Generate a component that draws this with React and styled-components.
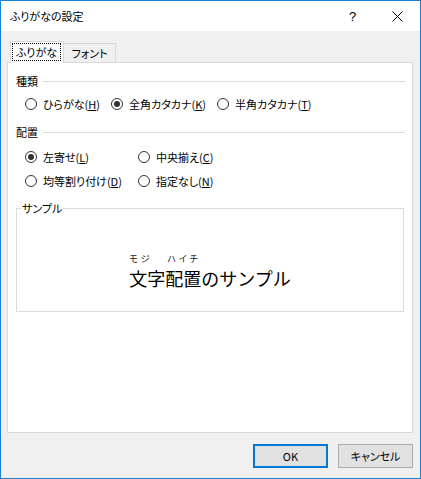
import React from "react";
import styled, { createGlobalStyle } from "styled-components";

const GlobalStyle = createGlobalStyle`
  html, body {
    margin: 0;
    padding: 0;
    background: #f0f0f0;
  }
  body {
    font-family: "Noto Sans CJK JP", "Noto Sans", sans-serif;
    font-size: 11px;
    color: #000;
    font-feature-settings: "palt";
  }
`;

// Window frame
const Window = styled.div`
  width: 421px;
  height: 479px;
  box-sizing: border-box;
  border: 1px solid #1c7fd6;
  background: #f0f0f0;
  display: flex;
  flex-direction: column;
`;

const TitleBar = styled.div`
  height: 30px;
  background: #fff;
  display: flex;
  align-items: center;
  padding-left: 9px;
  font-size: 11px;
`;

const Title = styled.div`
  flex: 1;
`;

const CaptionButton = styled.div`
  width: 45px;
  height: 30px;
  display: flex;
  align-items: center;
  justify-content: center;
  font-family: "Liberation Sans", sans-serif;
  font-size: 13px;
`;

const Body = styled.div`
  flex: 1;
  display: flex;
  flex-direction: column;
  padding: 11px 7px 10px 6px;
`;

// Tabs
const TabRow = styled.div`
  display: flex;
  align-items: flex-end;
  padding-left: 3px;
  height: 21px;
  position: relative;
  z-index: 1;
  margin-bottom: -1px;
`;

const Tab = styled.div`
  box-sizing: border-box;
  width: ${(p) => (p.$active ? "54px" : "52px")};
  height: ${(p) => (p.$active ? "22px" : "20px")};
  background: ${(p) => (p.$active ? "#fff" : "#f0f0f0")};
  border: 1px solid #d9d9d9;
  border-bottom: ${(p) => (p.$active ? "none" : "1px solid #d9d9d9")};
  border-left: ${(p) => (p.$active ? "1px solid #d9d9d9" : "none")};
  display: flex;
  align-items: center;
  justify-content: center;
  padding: ${(p) => (p.$active ? "1px 2px 2px 1px" : "0")};
`;

const FocusRect = styled.div`
  flex: 1;
  align-self: stretch;
  border: 1px dotted #000;
  display: flex;
  align-items: center;
  justify-content: center;
`;

const Panel = styled.div`
  width: 406px;
  height: 371px;
  box-sizing: border-box;
  background: #fff;
  border: 1px solid #d9d9d9;
  padding: 11px 7px 0 8px;
  display: flex;
  flex-direction: column;
`;

// Groups
const GroupHeader = styled.div`
  display: flex;
  align-items: center;
  height: 14px;
  gap: 5px;
  margin-top: ${(p) => p.$top || 0}px;
  &::after {
    content: "";
    flex: 1;
    height: 1px;
    background: #dcdcdc;
  }
`;

const RadioRow = styled.div`
  display: grid;
  grid-template-columns: ${(p) => p.$cols};
  align-items: center;
  height: 24px;
  padding-left: 9px;
  margin-top: ${(p) => p.$top || 0}px;
`;

const RadioItem = styled.label`
  display: flex;
  align-items: center;
  gap: 6px;
  white-space: nowrap;
`;

const RadioCircle = styled.span`
  width: 12px;
  height: 12px;
  box-sizing: border-box;
  border: 1px solid #333;
  border-radius: 50%;
  display: flex;
  align-items: center;
  justify-content: center;
  &::after {
    content: "";
    width: 6px;
    height: 6px;
    border-radius: 50%;
    background: ${(p) => (p.$checked ? "#333" : "transparent")};
  }
`;

const Key = styled.span`
  text-decoration: underline;
  text-underline-offset: 1px;
`;

// Sample frame
const SampleFrame = styled.fieldset`
  margin: 8px 0 0 0;
  width: 388px;
  height: 111px;
  box-sizing: border-box;
  border: 1px solid #dcdcdc;
  padding: 0;
  display: flex;
  flex-direction: column;
  align-items: center;
`;

const Legend = styled.legend`
  margin-left: 4px;
  padding: 0 1px;
  line-height: 14px;
`;

const SampleText = styled.div`
  margin-top: 39px;
  display: flex;
  flex-direction: column;
  gap: 3px;
`;

const RubyLine = styled.div`
  display: flex;
  font-size: 9px;
  line-height: 10px;
  letter-spacing: 3px;
  color: #222;
`;

const RubyPart = styled.span`
  width: ${(p) => p.$w}px;
`;

const MainText = styled.div`
  font-size: 18px;
  line-height: 22px;
  font-feature-settings: normal;
`;

// Footer
const Footer = styled.div`
  display: flex;
  justify-content: flex-end;
  gap: 10px;
  margin-top: 11px;
`;

const Button = styled.div`
  width: 75px;
  height: 24px;
  box-sizing: border-box;
  background: #e1e1e1;
  border: ${(p) => (p.$default ? "2px solid #0078d7" : "1px solid #adadad")};
  display: flex;
  align-items: center;
  justify-content: center;
`;

const Radio = ({ checked, label, k }) => (
  <RadioItem>
    <RadioCircle $checked={checked} />
    <span>
      {label}(<Key>{k}</Key>)
    </span>
  </RadioItem>
);

const App = () => {
  return (
    <>
      <GlobalStyle />
      <Window>
        <TitleBar>
          <Title>ふりがなの設定</Title>
          <CaptionButton>?</CaptionButton>
          <CaptionButton>
            <svg width="11" height="11" viewBox="0 0 11 11">
              <path d="M0.5 0.5 L10.5 10.5 M10.5 0.5 L0.5 10.5" stroke="#000" strokeWidth="1" />
            </svg>
          </CaptionButton>
        </TitleBar>
        <Body>
          <TabRow>
            <Tab $active>
              <FocusRect>ふりがな</FocusRect>
            </Tab>
            <Tab>フォント</Tab>
          </TabRow>
          <Panel>
            <GroupHeader>種類</GroupHeader>
            <RadioRow $cols="86px 106px auto" $top={4}>
              <Radio label="ひらがな" k="H" />
              <Radio checked label="全角カタカナ" k="K" />
              <Radio label="半角カタカナ" k="T" />
            </RadioRow>
            <GroupHeader $top={9}>配置</GroupHeader>
            <RadioRow $cols="113px auto" $top={6}>
              <Radio checked label="左寄せ" k="L" />
              <Radio label="中央揃え" k="C" />
            </RadioRow>
            <RadioRow $cols="113px auto">
              <Radio label="均等割り付け" k="D" />
              <Radio label="指定なし" k="N" />
            </RadioRow>
            <SampleFrame>
              <Legend>サンプル</Legend>
              <SampleText>
                <RubyLine>
                  <RubyPart $w={38}>モジ</RubyPart>
                  <RubyPart $w={40}>ハイチ</RubyPart>
                </RubyLine>
                <MainText>文字配置のサンプル</MainText>
              </SampleText>
            </SampleFrame>
          </Panel>
          <Footer>
            <Button $default>OK</Button>
            <Button>キャンセル</Button>
          </Footer>
        </Body>
      </Window>
    </>
  );
};

export default App;
